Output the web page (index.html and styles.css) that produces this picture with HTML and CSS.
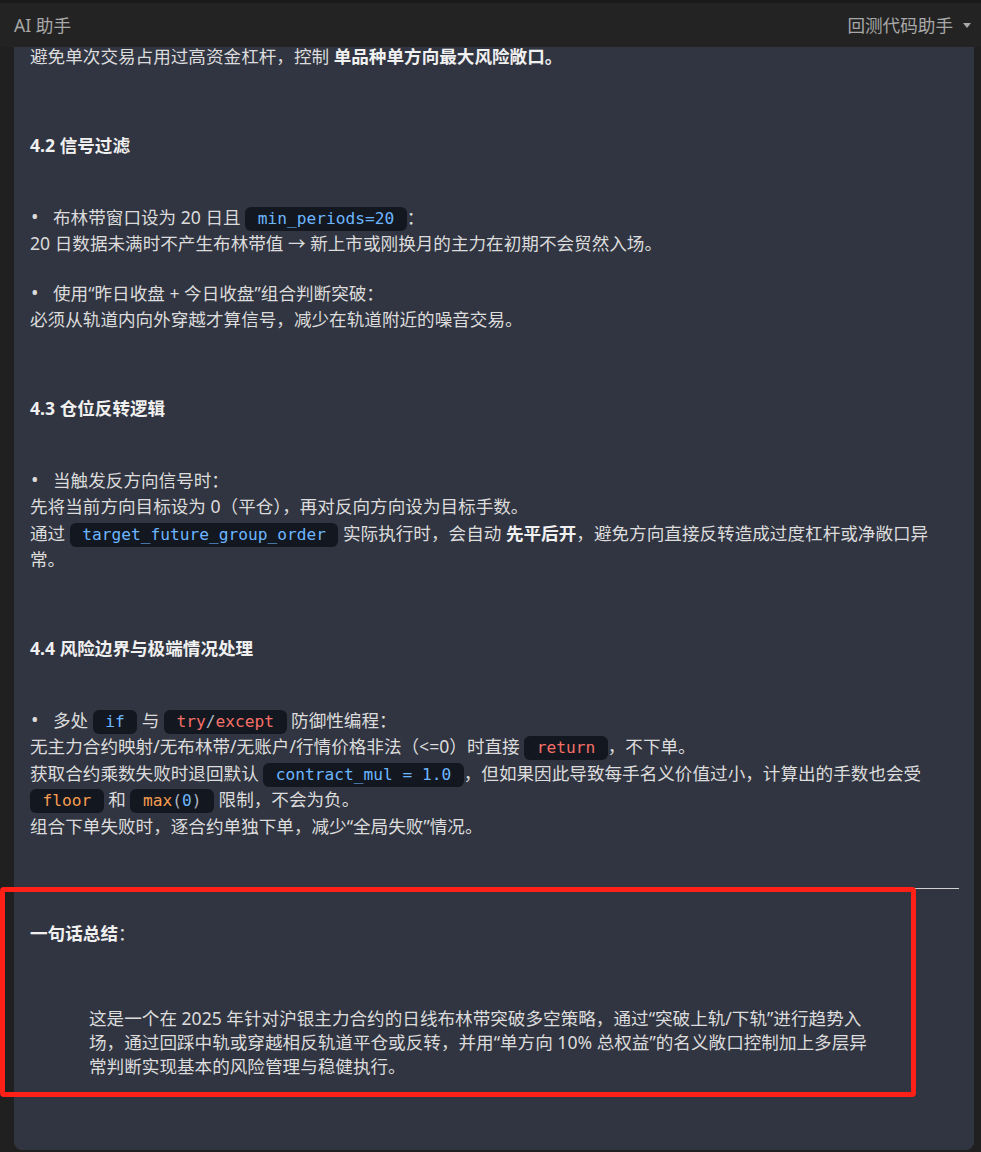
FILE: index.html
```html
<!DOCTYPE html>
<html lang="zh-CN">

<head>
    <meta charset="UTF-8">
    <meta name="viewport" content="width=device-width, initial-scale=1.0">
    <title>AI 助手</title>

    <link rel="stylesheet" href="styles.css">
</head>

<body>
    <header class="topbar">
        <span class="topbar-title">AI 助手</span>
        <span class="topbar-select">回测代码助手 <i class="caret"></i></span>
    </header>

    <div class="page">
        <div class="card">
            <p>避免单次交易占用过高资金杠杆，控制 <strong>单品种单方向最大风险敞口。</strong></p>

            <p class="section-title"><strong>4.2 信号过滤</strong></p>
            <ul class="items">
                <li>布林带窗口设为 20 日且 <code class="code">min_periods=20</code>：<br>20 日数据未满时不产生布林带值 → 新上市或刚换月的主力在初期不会贸然入场。</li>
                <li>使用“昨日收盘 + 今日收盘”组合判断突破：<br>必须从轨道内向外穿越才算信号，减少在轨道附近的噪音交易。</li>
            </ul>

            <p class="section-title"><strong>4.3 仓位反转逻辑</strong></p>
            <ul class="items">
                <li>当触发反方向信号时：<br>先将当前方向目标设为 0（平仓），再对反向方向设为目标手数。<br>通过 <code class="code">target_future_group_order</code> 实际执行时，会自动 <strong>先平后开</strong>，避免方向直接反转造成过度杠杆或净敞口异常。</li>
            </ul>

            <p class="section-title"><strong>4.4 风险边界与极端情况处理</strong></p>
            <ul class="items">
                <li>多处 <code class="code">if</code> 与 <code class="code"><span class="c-red">try</span><span class="c-plain">/</span><span class="c-red">except</span></code> 防御性编程：<br>无主力合约映射/无布林带/无账户/行情价格非法（&lt;=0）时直接 <code class="code c-red">return</code>，不下单。<br>获取合约乘数失败时退回默认 <code class="code">contract_mul = 1.0</code>，但如果因此导致每手名义价值过小，计算出的手数也会受 <code class="code c-orange">floor</code> 和 <code class="code"><span class="c-orange">max</span><span class="c-plain">(</span>0<span class="c-plain">)</span></code> 限制，不会为负。<br>组合下单失败时，逐合约单独下单，减少“全局失败”情况。</li>
            </ul>

            <div class="summary">
                <hr class="rule">
                <p class="summary-title"><strong>一句话总结</strong>：</p>
                <blockquote class="summary-text">这是一个在 2025 年针对沪银主力合约的日线布林带突破多空策略，通过“突破上轨/下轨”进行趋势入场，通过回踩中轨或穿越相反轨道平仓或反转，并用“单方向 10% 总权益”的名义敞口控制加上多层异常判断实现基本的风险管理与稳健执行。</blockquote>
                <div class="mark-box"></div>
            </div>
        </div>
    </div>
</body>

</html>
```

FILE: styles.css
```css
body {
    margin: 0;
    background-color: #202020;
    font-family: "Noto Sans", "Noto Sans CJK SC", sans-serif;
    font-size: 17.6px;
    line-height: 26.4px;
    color: #dcdcdc;
}

.topbar {
    position: fixed;
    top: 0;
    left: 0;
    right: 0;
    z-index: 10;
    height: 44px;
    border-top: 3px solid #1a1a1a;
    background-color: #232323;
    display: flex;
    align-items: center;
    justify-content: space-between;
    padding: 0 10px 0 14px;
    color: #a8a8a8;
}

.topbar-select {
    display: flex;
    align-items: center;
    gap: 10px;
}

.caret {
    width: 0;
    height: 0;
    border-left: 4px solid transparent;
    border-right: 4px solid transparent;
    border-top: 5px solid #a8a8a8;
}

.page {
    padding: 0 7px 2px 14px;
}

.card {
    background-color: #313541;
    border-radius: 0 0 8px 8px;
    padding: 43px 15px 72px 16px;
}

p {
    margin: 0;
}

strong {
    font-weight: 700;
    color: #f0f0f0;
}

.section-title {
    margin: 63px 0 45px;
}

.items {
    list-style: none;
    margin: 0;
    padding: 0;
}

.items li + li {
    margin-top: 23px;
}

.items li::before {
    content: "•";
    display: inline-block;
    width: 23px;
    padding-left: 1px;
    box-sizing: border-box;
    font-size: 20px;
}

.code {
    font-family: "DejaVu Sans Mono", monospace;
    font-size: 16.2px;
    line-height: 1;
    color: #6cb6ff;
    background-color: #13171f;
    border-radius: 6px;
    padding: 2px 12.5px 3px;
}

.c-red {
    color: #f47067;
}

.c-orange {
    color: #f69d50;
}

.c-plain {
    color: #adbac7;
}

.summary {
    position: relative;
    margin-top: 49px;
}

.rule {
    margin: 0;
    border: none;
    height: 1px;
    background-color: #d0d0d0;
}

.summary-title {
    margin-top: 31px;
}

.summary-text {
    margin: 60px 79px 0 59px;
    line-height: 24px;
}

.mark-box {
    position: absolute;
    top: -1px;
    left: -30px;
    width: 916px;
    height: 210px;
    box-sizing: border-box;
    border: 5px solid #ff2018;
    border-radius: 4px;
}
```
